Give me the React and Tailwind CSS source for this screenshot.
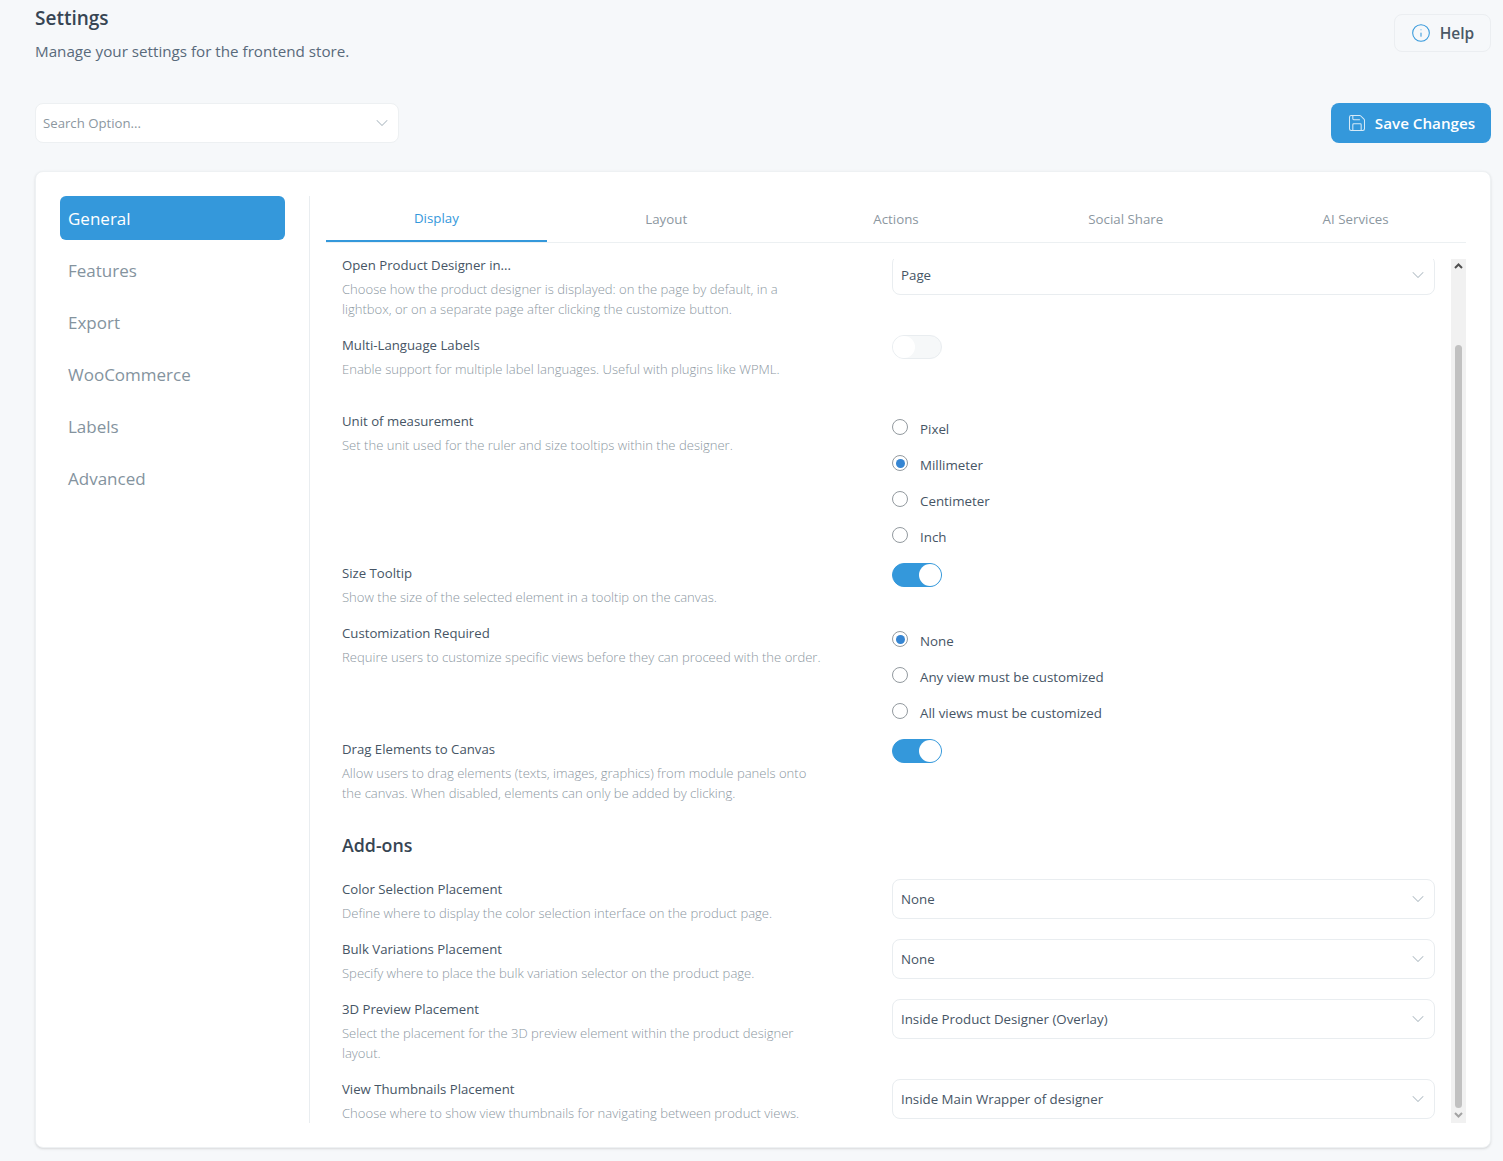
import { ChevronDown, Info, Save } from 'lucide-react'

const navItems = ['General', 'Features', 'Export', 'WooCommerce', 'Labels', 'Advanced']
const tabs = ['Display', 'Layout', 'Actions', 'Social Share', 'AI Services']

function Select({ value }) {
  return (
    <div className="flex h-10 items-center justify-between rounded-lg border border-[#e9edf0] bg-white pl-2 pr-[6px] text-[13.3px] text-[#465565]">
      <span className="pt-[2px]">{value}</span>
      <ChevronDown size={20} strokeWidth={1.25} className="text-[#b4bfc6]" />
    </div>
  )
}

function Toggle({ on }) {
  return (
    <div className={`flex h-6 w-[50px] items-center rounded-full border ${on ? 'justify-end border-[#3498db] bg-[#3498db]' : 'justify-start border-[#e9edf0] bg-[#f6f8f9]'}`}>
      <div className="h-[22px] w-[22px] rounded-full bg-white" />
    </div>
  )
}

function Radios({ options, selected }) {
  return (
    <div className="flex flex-col">
      {options.map((option) => (
        <div key={option} className="flex h-9 items-center text-[13.35px] text-[#465565]">
          <div className="mb-[4px] mr-[12px] flex h-4 w-4 items-center justify-center rounded-full border border-[#939a9f] bg-white">
            {option === selected && <div className="h-[9px] w-[9px] rounded-full bg-[#3585d2]" />}
          </div>
          <span>{option}</span>
        </div>
      ))}
    </div>
  )
}

function Row({ title, desc, className = 'mb-4', first, children }) {
  return (
    <div className={`grid grid-cols-[550px_543px] ${className}`}>
      <div className="w-[480px]">
        <div className={`text-[13.2px] text-[#465565] ${first ? 'mb-2 leading-3' : 'mb-1 leading-5'}`}>{title}</div>
        <div className="text-[13.07px] font-light leading-5 text-[#8c979f]">{desc}</div>
      </div>
      {first ? (
        <div className="overflow-hidden">
          <div className="-mt-1">{children}</div>
        </div>
      ) : (
        <div>{children}</div>
      )}
    </div>
  )
}

export default function App() {
  return (
    <div className="h-[1161px] overflow-hidden bg-[#f6f8fa] font-['Open_Sans',sans-serif]">
      <div className="pl-[35px] pr-3">
        <div className="flex items-start justify-between">
          <div>
            <h1 className="mt-[6px] text-[19px] font-semibold leading-6 text-[#374553]">Settings</h1>
            <p className="mt-[9px] text-[15.2px] leading-6 text-[#596a7b]">Manage your settings for the frontend store.</p>
          </div>
          <button className="mt-[14px] flex h-[38px] w-[97px] items-center justify-center gap-[9px] rounded-lg border border-[#ebeef1] text-[15.5px] font-semibold text-[#4a5866]">
            <Info size={20} strokeWidth={1.25} className="text-[#3498db]" />
            <span className="pt-[2px]">Help</span>
          </button>
        </div>

        <div className="mt-10 flex items-center justify-between">
          <div className="flex h-10 w-[364px] items-center justify-between rounded-lg border border-[#edf0f2] bg-white pl-[7px] pr-[6px] text-[13.2px] text-[#8c979f]">
            <span className="pt-[2px]">Search Option...</span>
            <ChevronDown size={20} strokeWidth={1.25} className="text-[#b4bfc6]" />
          </div>
          <button className="flex h-10 w-40 items-center justify-center gap-2 rounded-lg bg-[#3498db] text-[15.2px] font-semibold text-white">
            <Save size={20} strokeWidth={1.25} className="opacity-80" />
            <span>Save Changes</span>
          </button>
        </div>

        <div className="mt-7 flex h-[977px] rounded-lg border border-[#eef1f3] bg-white pl-6 pr-6 pt-6 shadow-sm">
          <nav className="flex w-[225px] shrink-0 flex-col gap-2">
            {navItems.map((item, i) => (
              <div key={item} className={`flex h-11 items-center rounded-md px-2 pt-[2px] text-[17px] ${i === 0 ? 'bg-[#3498db] text-white' : 'text-[#84939e]'}`}>
                {item}
              </div>
            ))}
          </nav>

          <div className="ml-6 mb-6 flex w-[1157px] flex-col border-l border-[#e9edf0] pl-4">
            <div className="grid h-[47px] shrink-0 grid-cols-5 gap-x-[9px] border-b border-[#ecf0f2]">
              {tabs.map((tab, i) => (
                <div key={tab} className={`flex items-center justify-center pt-[2px] text-[13.3px] ${i === 0 ? 'h-[46px] border-b-2 border-[#3498db] text-[#3498db]' : 'h-[45px] text-[#8c979f]'}`}>
                  {tab}
                </div>
              ))}
            </div>

            <div className="mt-4 flex min-h-0 flex-1">
              <div className="min-w-0 flex-1 pl-4">
                <Row
                  first
                  title="Open Product Designer in..."
                  desc="Choose how the product designer is displayed: on the page by default, in a lightbox, or on a separate page after clicking the customize button."
                >
                  <Select value="Page" />
                </Row>
                <Row
                  title="Multi-Language Labels"
                  desc="Enable support for multiple label languages. Useful with plugins like WPML."
                  className="mb-8"
                >
                  <Toggle />
                </Row>
                <Row
                  title="Unit of measurement"
                  desc="Set the unit used for the ruler and size tooltips within the designer."
                  className="mb-2"
                >
                  <Radios options={['Pixel', 'Millimeter', 'Centimeter', 'Inch']} selected="Millimeter" />
                </Row>
                <Row title="Size Tooltip" desc="Show the size of the selected element in a tooltip on the canvas.">
                  <Toggle on />
                </Row>
                <Row
                  title="Customization Required"
                  desc="Require users to customize specific views before they can proceed with the order."
                  className="mb-2"
                >
                  <Radios options={['None', 'Any view must be customized', 'All views must be customized']} selected="None" />
                </Row>
                <Row
                  title="Drag Elements to Canvas"
                  desc="Allow users to drag elements (texts, images, graphics) from module panels onto the canvas. When disabled, elements can only be added by clicking."
                  className="mb-[30px]"
                >
                  <Toggle on />
                </Row>

                <h2 className="mb-[22px] text-[17.8px] font-semibold leading-6 text-[#374553]">Add-ons</h2>

                <Row title="Color Selection Placement" desc="Define where to display the color selection interface on the product page.">
                  <Select value="None" />
                </Row>
                <Row title="Bulk Variations Placement" desc="Specify where to place the bulk variation selector on the product page.">
                  <Select value="None" />
                </Row>
                <Row title="3D Preview Placement" desc="Select the placement for the 3D preview element within the product designer layout.">
                  <Select value="Inside Product Designer (Overlay)" />
                </Row>
                <Row title="View Thumbnails Placement" className="" desc="Choose where to show view thumbnails for navigating between product views.">
                  <Select value="Inside Main Wrapper of designer" />
                </Row>
              </div>

              <div className="flex w-[15px] shrink-0 flex-col items-center bg-[#f1f1f1]">
                <svg width="9" height="6" viewBox="0 0 9 6" className="mt-[4px]">
                  <path d="M1 5 L4.5 1.5 L8 5" fill="none" stroke="#505050" strokeWidth="2" />
                </svg>
                <div className="mt-[76px] h-[763px] w-[7px] rounded-full bg-[#c1c1c1]" />
                <svg width="9" height="6" viewBox="0 0 9 6" className="mt-[4px]">
                  <path d="M1 1 L4.5 4.5 L8 1" fill="none" stroke="#a3a3a3" strokeWidth="2" />
                </svg>
              </div>
            </div>
          </div>
        </div>
      </div>
    </div>
  )
}
